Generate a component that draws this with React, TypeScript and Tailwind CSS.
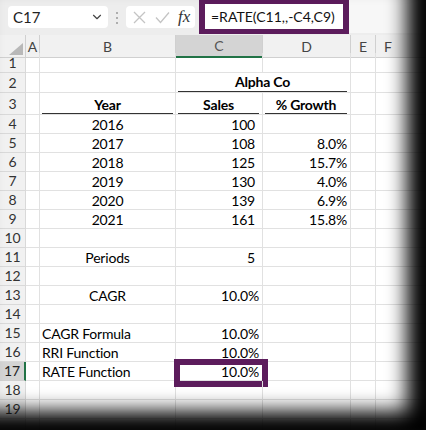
import { ChevronDown } from 'lucide-react'

type Row = {
  n: number
  h: string
  b?: string
  bLeft?: boolean
  bBold?: boolean
  c?: string
  cPct?: boolean
  cBold?: boolean
  d?: string
  dBold?: boolean
  underline?: boolean
}

const rows: Row[] = [
  { n: 1, h: 'h-[20px]' },
  { n: 2, h: 'h-[20px]' },
  { n: 3, h: 'h-[22px]', b: 'Year', bBold: true, c: 'Sales', cBold: true, d: '% Growth', dBold: true, underline: true },
  { n: 4, h: 'h-[19px]', b: '2016', c: '100' },
  { n: 5, h: 'h-[19px]', b: '2017', c: '108', d: '8.0%' },
  { n: 6, h: 'h-[19px]', b: '2018', c: '125', d: '15.7%' },
  { n: 7, h: 'h-[19px]', b: '2019', c: '130', d: '4.0%' },
  { n: 8, h: 'h-[19px]', b: '2020', c: '139', d: '6.9%' },
  { n: 9, h: 'h-[19px]', b: '2021', c: '161', d: '15.8%' },
  { n: 10, h: 'h-[19px]' },
  { n: 11, h: 'h-[19px]', b: 'Periods', c: '5' },
  { n: 12, h: 'h-[19px]' },
  { n: 13, h: 'h-[19px]', b: 'CAGR', c: '10.0%', cPct: true },
  { n: 14, h: 'h-[19px]' },
  { n: 15, h: 'h-[19px]', b: 'CAGR Formula', bLeft: true, c: '10.0%', cPct: true },
  { n: 16, h: 'h-[19px]', b: 'RRI Function', bLeft: true, c: '10.0%', cPct: true },
  { n: 17, h: 'h-[19px]', b: 'RATE Function', bLeft: true, c: '10.0%', cPct: true },
  { n: 18, h: 'h-[19px]' },
  { n: 19, h: 'h-[19px]' },
]

const grid = 'grid grid-cols-[26px_14px_136px_87px_88px_25px_1fr]'
const cell = 'border-r border-b border-[#e1e1e1]'

function Header({ n, active }: { n: number; active: boolean }) {
  return (
    <div
      className={
        active
          ? 'flex items-center justify-center border-b border-[#d0d0d0] border-r-2 border-r-[#217346] bg-[#d4d4d4] text-[14px] text-[#222]'
          : 'flex items-center justify-center border-b border-r border-[#d9d9d9] bg-[#f1f1f1] text-[14px] text-[#333]'
      }
    >
      {n}
    </div>
  )
}

export default function App() {
  return (
    <div className="relative w-[426px] h-[430px] overflow-hidden bg-white font-['Lato','Liberation_Sans',sans-serif] text-black">
      {/* Formula bar */}
      <div className="flex h-[35px] items-start bg-[#ededed]">
        <div className="ml-[8px] mt-[6px] flex h-[22px] w-[100px] shrink-0 items-center justify-between rounded-[4px] bg-white pl-[5px] pr-[4px] text-[15px] text-[#222]">
          <span>C17</span>
          <ChevronDown size={14} strokeWidth={2} className="text-[#444]" />
        </div>
        <div className="mx-[8px] mt-[12px] flex shrink-0 flex-col gap-[3px]">
          <span className="h-[2px] w-[2px] rounded-full bg-[#999]" />
          <span className="h-[2px] w-[2px] rounded-full bg-[#999]" />
          <span className="h-[2px] w-[2px] rounded-full bg-[#999]" />
        </div>
        <div className="mt-[6px] flex h-[22px] w-[69px] shrink-0 items-center rounded-[4px] bg-white pl-[7px]">
          <svg width="13" height="13" viewBox="0 0 13 13">
            <path d="M1 1 L12 12 M12 1 L1 12" stroke="#c4c4c4" strokeWidth="1.3" fill="none" />
          </svg>
          <svg width="15" height="13" viewBox="0 0 15 13" className="ml-[9px]">
            <path d="M1 6.5 L5.5 11.5 L14 1.5" stroke="#c4c4c4" strokeWidth="1.3" fill="none" />
          </svg>
          <span className="ml-[8px] font-['Liberation_Serif',serif] text-[17px] italic text-[#333]">fx</span>
        </div>
        <div className="ml-[4px] flex h-[34px] w-[150px] shrink-0 items-center whitespace-nowrap border-x-[6px] border-t-[4px] border-b-[5px] border-[#5c1c5c] bg-white pl-[6px] text-[14px] text-[#111]">
          =RATE(C11,,-C4,C9)
        </div>
        <div className="h-[33px] flex-1 bg-[#f7f7f7]" />
      </div>

      {/* Column headers */}
      <div className={`${grid} h-[18px] text-[14px] text-[#444]`}>
        <div className="relative border-r border-b border-[#d0d0d0] bg-[#f1f1f1]">
          <svg width="14" height="12" viewBox="0 0 14 12" className="absolute right-[2px] bottom-[2px]">
            <polygon points="14,0 14,12 0,12" fill="#b8b8b8" />
          </svg>
        </div>
        <div className="flex items-center justify-center border-r border-b border-[#d0d0d0] bg-[#f1f1f1]">A</div>
        <div className="flex items-center justify-center border-r border-b border-[#d0d0d0] bg-[#f1f1f1]">B</div>
        <div className="flex items-center justify-center border-r border-[#d0d0d0] border-b-2 border-b-[#217346] bg-[#d4d4d4] text-[#555]">C</div>
        <div className="flex items-center justify-center border-r border-b border-[#d0d0d0] bg-[#f1f1f1]">D</div>
        <div className="flex items-center justify-center border-r border-b border-[#d0d0d0] bg-[#f1f1f1]">E</div>
        <div className="flex items-center pl-[8px] border-b border-[#d0d0d0] bg-[#f1f1f1]">F</div>
      </div>

      {/* Rows */}
      <div className="text-[14px] leading-[16px] tracking-[-0.2px]">
        {rows.map((r) => (
          <div key={r.n} className={`${grid} ${r.h}`}>
            <Header n={r.n} active={r.n === 17} />
            <div className={cell} />
            <div className={`${cell} px-[2px]`}>
              <div
                className={`flex h-full items-end ${r.bLeft ? 'justify-start' : 'justify-center'} ${r.bBold ? 'font-bold' : ''} ${r.underline ? 'border-b-[1.5px] border-[#333]' : ''}`}
              >
                {r.b}
              </div>
            </div>
            {r.n === 2 ? (
              <div className="col-span-2 border-r border-b border-[#e1e1e1] pl-[2px] pr-[3px]">
                <div className="flex h-full items-end justify-center border-b-[1.5px] border-[#333] pb-[1px] font-bold">Alpha Co</div>
              </div>
            ) : (
              <>
                <div className={`relative ${cell} pl-[2px] ${r.underline ? 'pr-[3px]' : r.cPct ? 'pr-[3px]' : 'pr-[7px]'}`}>
                  <div
                    className={`flex h-full items-end ${r.cBold ? 'justify-center font-bold' : 'justify-end'} ${r.underline ? 'border-b-[1.5px] border-[#333]' : ''}`}
                  >
                    {r.c}
                  </div>
                  {r.n === 17 && (
                    <div className="pointer-events-none absolute -top-[3px] -left-[2px] -right-[6px] -bottom-[7px] border-[6px] border-[#5c1c5c]" />
                  )}
                </div>
                <div className={`${cell} pl-[2px] pr-[3px]`}>
                  <div
                    className={`flex h-full items-end ${r.dBold ? 'justify-center font-bold' : 'justify-end'} ${r.underline ? 'border-b-[1.5px] border-[#333]' : ''}`}
                  >
                    {r.d}
                  </div>
                </div>
              </>
            )}
            <div className={cell} />
            <div className="border-b border-[#e1e1e1]" />
          </div>
        ))}
        <div className={`${grid} h-[20px]`}>
          <div className="border-r border-[#d9d9d9] bg-[#f1f1f1]" />
          <div className="border-r border-[#e1e1e1]" />
          <div className="border-r border-[#e1e1e1]" />
          <div className="border-r border-[#e1e1e1]" />
          <div className="border-r border-[#e1e1e1]" />
          <div className="border-r border-[#e1e1e1]" />
          <div />
        </div>
      </div>

      {/* Window shadow */}
      <div className="pointer-events-none absolute inset-0 shadow-[inset_-19px_-19px_20px_0px_#000]" />
    </div>
  )
}
